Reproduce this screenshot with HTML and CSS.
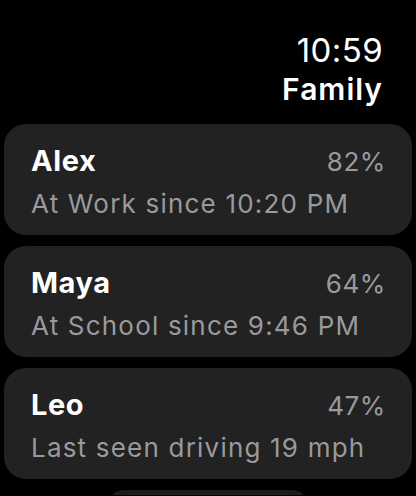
FILE: index.html
```html
<!DOCTYPE html>
<html lang="en">
<head>
    <meta charset="UTF-8">
    <meta name="viewport" content="width=device-width, initial-scale=1.0">
    <title>Family</title>
    <link rel="stylesheet" href="styles.css">
</head>
<body>
    <div class="header">
        <div class="time">10:59</div>
        <div class="title">Family</div>
    </div>

    <div class="list">
        <div class="card">
            <div class="row">
                <span class="name">Alex</span>
                <span class="battery">82%</span>
            </div>
            <div class="status">At Work since 10:20 PM</div>
        </div>
        <div class="card">
            <div class="row">
                <span class="name">Maya</span>
                <span class="battery">64%</span>
            </div>
            <div class="status">At School since 9:46 PM</div>
        </div>
        <div class="card">
            <div class="row">
                <span class="name">Leo</span>
                <span class="battery">47%</span>
            </div>
            <div class="status">Last seen driving 19 mph</div>
        </div>
        <div class="more"></div>
    </div>
</body>
</html>
```

FILE: styles.css
```css
body {
    font-family: Inter, "Noto Sans", sans-serif;
    margin: 0;
    background: #000;
    color: #fff;
    height: 496px;
    overflow: hidden;
}
.header {
    text-align: right;
    padding: 31px 33px 0 0;
    margin-bottom: 15px;
}
.time {
    font-size: 33px;
    line-height: 39px;
    font-weight: 400;
    letter-spacing: 0.4px;
}
.title {
    font-size: 30px;
    line-height: 39px;
    font-weight: 600;
    letter-spacing: 1px;
}
.list {
    display: flex;
    flex-direction: column;
    align-items: center;
    gap: 11px;
}
.card {
    width: 408px;
    height: 111px;
    box-sizing: border-box;
    background: #222222;
    border-radius: 22px;
    padding: 19px 26px 0 27px;
}
.row {
    display: flex;
    justify-content: space-between;
    align-items: baseline;
    line-height: 36px;
}
.name {
    font-size: 29px;
    font-weight: 700;
    letter-spacing: 0.6px;
}
.battery {
    font-size: 26px;
    color: #999a9e;
    letter-spacing: 0.6px;
}
.status {
    font-size: 26px;
    line-height: 47px;
    color: #999a9e;
    letter-spacing: 1.2px;
    white-space: nowrap;
}
.more {
    width: 190px;
    height: 5px;
    background: #1c1c1e;
    border-radius: 14px 14px 0 0 / 5px 5px 0 0;
}
```
